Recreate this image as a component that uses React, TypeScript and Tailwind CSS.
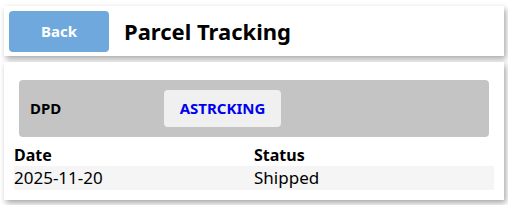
export default function App() {
  return (
    <div
      className="min-h-screen bg-white px-[4px] pt-[6px] text-black"
      style={{ fontFamily: '"Noto Sans", "Open Sans", sans-serif' }}
    >
      {/* Header */}
      <div className="flex h-[50px] items-center bg-white pl-[5px] shadow-[2px_3px_6px_rgba(0,0,0,0.35)]">
        <button className="flex h-[41px] w-[100px] items-center justify-center rounded-[4px] bg-[#6fa8dc] text-[15px] font-bold text-white">
          Back
        </button>
        <h1 className="ml-[15px] text-[22px] font-bold leading-none">Parcel Tracking</h1>
      </div>

      {/* Details */}
      <div className="mt-[6px] bg-white px-[10px] pb-[10px] pt-[18px] shadow-[2px_3px_6px_rgba(0,0,0,0.35)]">
        <div className="mx-[5px] flex h-[57px] items-center rounded-[4px] bg-[#c4c4c4] pl-[11px]">
          <span className="w-[134px] text-[15px] font-bold">DPD</span>
          <button className="flex h-[37px] w-[117px] items-center justify-center rounded-[4px] bg-[#f0f0f0] text-[15px] font-bold text-[#0000ee]">
            ASTRCKING
          </button>
        </div>
        <table className="mt-[8px] w-full table-fixed border-collapse text-left text-[17px]">
          <thead>
            <tr className="h-[21px]">
              <th className="p-0 text-[16px] font-bold leading-[21px]">Date</th>
              <th className="p-0 text-[16px] font-bold leading-[21px]">Status</th>
            </tr>
          </thead>
          <tbody>
            <tr className="h-[24px] bg-[#f5f5f5]">
              <td className="p-0 leading-[24px]">2025-11-20</td>
              <td className="p-0 leading-[24px]">Shipped</td>
            </tr>
          </tbody>
        </table>
      </div>
    </div>
  );
}
